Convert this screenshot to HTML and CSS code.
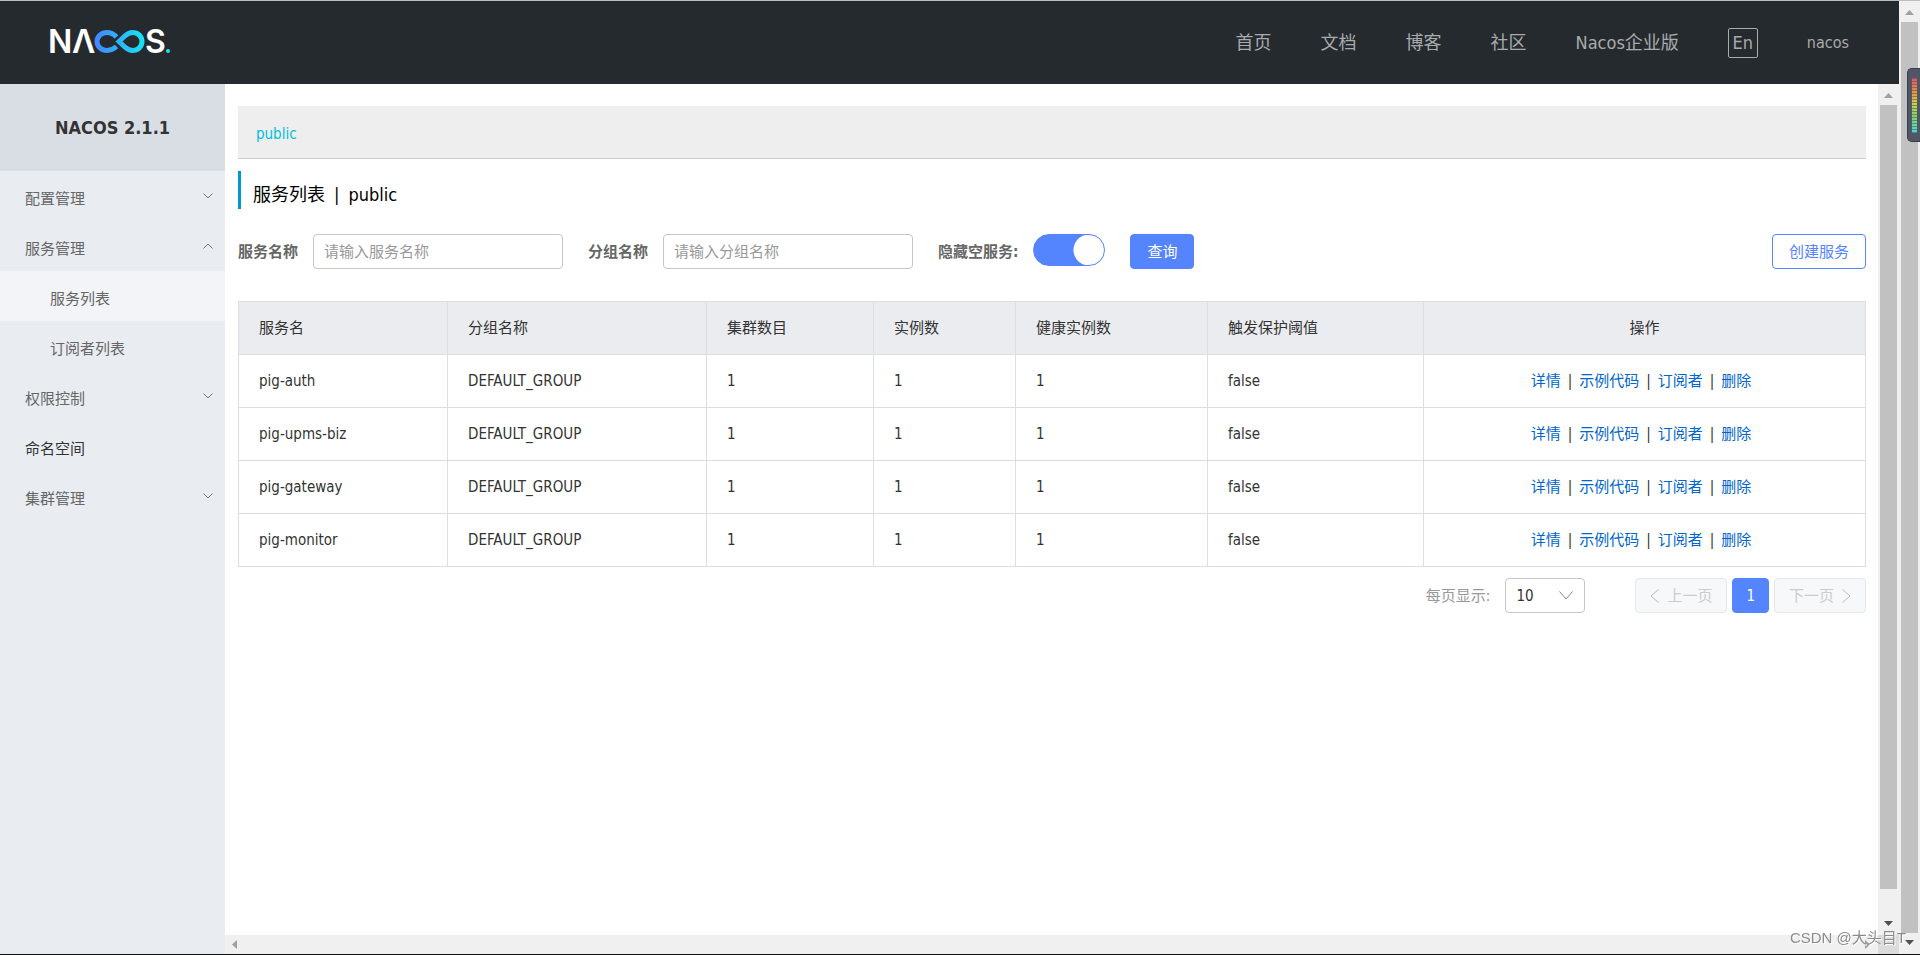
FILE: index.html
```html
<!DOCTYPE html>
<html lang="zh-CN">
<head>
<meta charset="utf-8">
<meta name="viewport" content="width=device-width, initial-scale=1">
<title>Nacos</title>
<link rel="stylesheet" href="styles.css">
</head>
<body>
<div class="page">
  <div class="shell">
    <header class="header">
      <a class="logo" href="#" aria-label="Nacos">
        <svg width="130" height="40" viewBox="-4 -8 130 40" aria-hidden="true">
          <defs>
            <linearGradient id="loop" x1="44" y1="0" x2="95" y2="0" gradientUnits="userSpaceOnUse">
              <stop offset="0" stop-color="#4584ff"/>
              <stop offset="1" stop-color="#15e5f5"/>
            </linearGradient>
          </defs>
          <text class="logo-letter" x="-2" y="24">N</text>
          <text class="logo-letter" x="22" y="24">Λ</text>
          <text class="logo-letter" x="95" y="24">S</text>
          <g fill="none" stroke="url(#loop)" stroke-width="5">
            <path d="M66.500 8C63.500 4.800 60.500 3.500 57 3.500C51.500 3.500 47 7.600 47 12.500S51.500 21.500 57 21.500C60.500 21.500 63.500 20.200 66.500 17.500"/>
            <path d="M69 12.500L75 6.800C77.600 4.600 80 3.500 82.500 3.500C88 3.500 92 7.500 92 12.500S88 21.500 82.500 21.500C80 21.500 77.600 20.400 75 18.200Z"/>
          </g>
          <circle cx="118" cy="22" r="2" fill="#15e5f5"/>
        </svg>
      </a>
      <nav class="nav">
        <a href="#">首页</a>
        <a href="#">文档</a>
        <a href="#">博客</a>
        <a href="#">社区</a>
        <a href="#">Nacos企业版</a>
        <button class="lang" type="button">En</button>
        <a class="user" href="#">nacos</a>
      </nav>
    </header>
    <div class="body">
      <aside class="sidebar">
        <h1 class="product">NACOS 2.1.1</h1>
        <nav class="menu">
          <a class="item" href="#"><span>配置管理</span><svg class="chev" viewBox="0 0 10 6"><path d="M.5 .5L5 5L9.500 .5"/></svg></a>
          <a class="item" href="#"><span>服务管理</span><svg class="chev" viewBox="0 0 10 6"><path d="M.5 5.500L5 1L9.500 5.500"/></svg></a>
          <a class="item sub active" href="#"><span>服务列表</span></a>
          <a class="item sub" href="#"><span>订阅者列表</span></a>
          <a class="item" href="#"><span>权限控制</span><svg class="chev" viewBox="0 0 10 6"><path d="M.5 .5L5 5L9.500 .5"/></svg></a>
          <a class="item dark" href="#"><span>命名空间</span></a>
          <a class="item" href="#"><span>集群管理</span><svg class="chev" viewBox="0 0 10 6"><path d="M.5 .5L5 5L9.500 .5"/></svg></a>
        </nav>
      </aside>
      <div class="frame">
        <div class="frame-row">
          <main class="content">
            <div class="namespaces"><a href="#">public</a></div>
            <h2 class="title"><span>服务列表</span><span>|</span><span>public</span></h2>
            <form class="filters">
              <label for="service">服务名称</label>
              <input class="text" id="service" type="text" placeholder="请输入服务名称">
              <label for="group">分组名称</label>
              <input class="text" id="group" type="text" placeholder="请输入分组名称">
              <label for="hide">隐藏空服务:</label>
              <input class="switch" id="hide" type="checkbox" role="switch" checked>
              <button class="btn primary" type="button">查询</button>
              <button class="btn outline" type="button">创建服务</button>
            </form>
            <table class="services">
              <colgroup>
                <col class="c-name"><col class="c-group"><col class="c-cluster"><col class="c-count"><col class="c-healthy"><col class="c-protect"><col>
              </colgroup>
              <thead>
                <tr><th>服务名</th><th>分组名称</th><th>集群数目</th><th>实例数</th><th>健康实例数</th><th>触发保护阈值</th><th class="ops">操作</th></tr>
              </thead>
              <tbody>
                <tr><td>pig-auth</td><td>DEFAULT_GROUP</td><td>1</td><td>1</td><td>1</td><td>false</td><td class="ops links"><a href="#">详情</a><i>|</i><a href="#">示例代码</a><i>|</i><a href="#">订阅者</a><i>|</i><a href="#">删除</a></td></tr>
                <tr><td>pig-upms-biz</td><td>DEFAULT_GROUP</td><td>1</td><td>1</td><td>1</td><td>false</td><td class="ops links"><a href="#">详情</a><i>|</i><a href="#">示例代码</a><i>|</i><a href="#">订阅者</a><i>|</i><a href="#">删除</a></td></tr>
                <tr><td>pig-gateway</td><td>DEFAULT_GROUP</td><td>1</td><td>1</td><td>1</td><td>false</td><td class="ops links"><a href="#">详情</a><i>|</i><a href="#">示例代码</a><i>|</i><a href="#">订阅者</a><i>|</i><a href="#">删除</a></td></tr>
                <tr><td>pig-monitor</td><td>DEFAULT_GROUP</td><td>1</td><td>1</td><td>1</td><td>false</td><td class="ops links"><a href="#">详情</a><i>|</i><a href="#">示例代码</a><i>|</i><a href="#">订阅者</a><i>|</i><a href="#">删除</a></td></tr>
              </tbody>
            </table>
            <div class="pager">
              <label for="size">每页显示:</label>
              <span class="select">
                <select id="size"><option>10</option><option>20</option><option>30</option></select>
                <svg viewBox="0 0 14 9"><path d="M.5 .5L7 8L13.500 .5"/></svg>
              </span>
              <button class="page-btn" type="button" disabled><svg viewBox="0 0 9 14"><path d="M8.500 .5L1 7L8.500 13.500"/></svg>上一页</button>
              <button class="page-btn current" type="button">1</button>
              <button class="page-btn" type="button" disabled>下一页<svg viewBox="0 0 9 14"><path d="M.5 .5L8 7L.5 13.500"/></svg></button>
            </div>
          </main>
          <div class="vbar">
            <svg class="arrow light" viewBox="0 0 9 5"><path d="M0 5L4.500 0L9 5Z"/></svg>
            <div class="thumb inner"></div>
            <svg class="arrow" viewBox="0 0 9 5"><path d="M0 0L4.500 5L9 0Z"/></svg>
          </div>
        </div>
        <div class="hbar">
          <svg class="side" viewBox="0 0 5 9"><path d="M5 0L0 4.500L5 9Z"/></svg>
          <svg class="side" viewBox="0 0 5 9"><path d="M0 0L5 4.500L0 9Z"/></svg>
          <div class="corner"></div>
        </div>
      </div>
    </div>
  </div>
  <div class="vbar outer">
    <svg class="arrow light" viewBox="0 0 9 5"><path d="M0 5L4.500 0L9 5Z"/></svg>
    <div class="thumb"></div>
    <svg class="arrow" viewBox="0 0 9 5"><path d="M0 0L4.500 5L9 0Z"/></svg>
  </div>
</div>
<div class="meter"><div class="meter-scale"></div></div>
<div class="watermark">CSDN @大头目T</div>
</body>
</html>
```

FILE: styles.css
```css
* {
  box-sizing: border-box;
}

body {
  margin: 0;
  color: #333;
  background: #fff;
  font: 15px/20px "DejaVu Sans Condensed", "Noto Sans CJK SC", sans-serif;
}

a {
  color: inherit;
  text-decoration: none;
}

button,
input,
select {
  margin: 0;
  font: inherit;
}

.page {
  display: flex;
  height: 100vh;
  border-top: 1px solid #bdbdbd;
  border-bottom: 1px solid #111;
}

.shell {
  display: flex;
  flex: 1;
  flex-direction: column;
  min-width: 0;
}

/* Header */
.header {
  display: flex;
  flex: none;
  align-items: center;
  justify-content: space-between;
  height: 83px;
  padding: 0 50px 0 46px;
  background: #252a2f;
}

.logo {
  display: flex;
  padding-bottom: 4px;
}

.logo-letter {
  fill: #fff;
  font: 600 32px Inter, sans-serif;
}

.nav {
  display: flex;
  align-items: center;
  gap: 49px;
  color: #a8aaac;
  font-size: 18px;
}

.lang {
  width: 30px;
  height: 30px;
  padding: 0;
  border: 1px solid #a8aaac;
  border-radius: 2px;
  color: inherit;
  background: none;
  font-size: 18px;
}

.nav .user {
  font-size: 16px;
}

.body {
  display: flex;
  flex: 1;
  min-height: 0;
}

/* Sidebar */
.sidebar {
  flex: none;
  width: 225px;
  background: #e9edf1;
}

.product {
  margin: 0;
  padding: 34px 0 33px;
  background: #d9dee4;
  font-size: 18px;
  line-height: 20px;
  text-align: center;
}

.item {
  display: flex;
  align-items: center;
  justify-content: space-between;
  height: 50px;
  padding: 0 12px 0 25px;
  color: #666;
}

.item span {
  padding-top: 5px;
}

.item.sub {
  padding-left: 50px;
}

.item.active {
  background: #f2f4f7;
}

.item.dark {
  color: #333;
}

.chev {
  width: 10px;
  height: 6px;
  fill: none;
  stroke: #777;
}

/* Main frame */
.frame {
  display: flex;
  flex: 1;
  flex-direction: column;
  min-width: 0;
}

.frame-row {
  display: flex;
  flex: 1;
  min-height: 0;
}

.content {
  flex: 1;
  min-width: 0;
  padding: 22px 12px 0 13px;
}

.namespaces {
  padding: 18px 18px 14px;
  border-bottom: 1px solid #ccc;
  color: #00c1de;
  background: #eee;
}

.title {
  display: flex;
  gap: 9px;
  margin: 12px 0 25px;
  padding: 14px 0 4px 12px;
  border-left: 3px solid #09c;
  color: #000;
  font-size: 18px;
  font-weight: 400;
}

.filters {
  display: flex;
  align-items: center;
  margin-bottom: 32px;
}

.filters label {
  margin-right: 15px;
  color: #666;
  font-weight: 700;
}

.text {
  width: 250px;
  height: 35px;
  margin-right: 25px;
  padding: 0 10px;
  border: 1px solid #c4c6cf;
  border-radius: 4px;
  background: #fff;
}

.text::placeholder {
  color: #999;
}

.switch {
  align-self: flex-start;
  width: 72px;
  height: 32px;
  margin-right: 25px;
  border: 1px solid #5584ff;
  border-radius: 16px;
  appearance: none;
  background: radial-gradient(circle at 55px 15px, #fff 15px, #5584ff 16px);
}

.btn {
  height: 35px;
  padding: 0 16px;
  border: 1px solid #5584ff;
  border-radius: 4px;
}

.primary {
  color: #fff;
  background: #5584ff;
}

.outline {
  margin-left: auto;
  color: #5584ff;
  background: #fff;
}

/* Table */
.services {
  width: 100%;
  border-collapse: collapse;
  table-layout: fixed;
}

.c-name { width: 209px; }
.c-group { width: 259px; }
.c-cluster { width: 167px; }
.c-count { width: 142px; }
.c-healthy { width: 192px; }
.c-protect { width: 216px; }

.services th,
.services td {
  padding: 16px 20px;
  border: 1px solid #dcdee3;
  font-weight: 400;
  text-align: left;
}

.services th {
  background: #ebecf0;
}

.services .ops {
  text-align: center;
}

.services .links {
  padding-right: 27px;
}

.ops a {
  color: #06c;
}

.ops i {
  margin: 0 7px;
  font-style: normal;
}

/* Pagination */
.pager {
  display: flex;
  align-items: center;
  justify-content: flex-end;
  gap: 5px;
  margin-top: 11px;
}

.pager label {
  margin-right: 10px;
  color: #999;
}

.select {
  position: relative;
  margin-right: 45px;
}

.select select {
  display: block;
  width: 80px;
  height: 35px;
  padding: 0 10px;
  border: 1px solid #c4c6cf;
  border-radius: 4px;
  appearance: none;
  color: #333;
  background: #fff;
}

.select svg {
  position: absolute;
  top: 13px;
  right: 12px;
  width: 14px;
  height: 9px;
  fill: none;
  stroke: #888;
}

.page-btn {
  display: flex;
  align-items: center;
  gap: 8px;
  height: 35px;
  padding: 0 14px;
  border: 1px solid #e6e7eb;
  border-radius: 4px;
  color: #ccc;
  background: #f7f8fa;
}

.page-btn svg {
  width: 9px;
  height: 14px;
  fill: none;
  stroke: #bbb;
  stroke-width: 1;
}

.page-btn.current {
  padding: 0 13px;
  border-color: #5584ff;
  color: #fff;
  background: #5584ff;
}

/* Scroll bars */
.vbar {
  display: flex;
  flex: none;
  flex-direction: column;
  align-items: center;
  width: 21px;
  padding: 9px 0;
  gap: 7px;
  background: #f0f0f0;
}

.arrow {
  width: 9px;
  height: 5px;
  fill: #505050;
}

.arrow.light {
  fill: #a0a0a0;
}

.thumb {
  flex: 1;
  width: 17px;
  background: #c1c1c1;
}

.thumb.inner {
  margin-bottom: 25px;
}

.hbar {
  display: flex;
  align-items: center;
  justify-content: space-between;
  height: 19px;
  padding-left: 7px;
  background: #f0f0f0;
}

.side {
  width: 5px;
  height: 9px;
  fill: #a0a0a0;
}

.side + .side {
  margin-left: auto;
  margin-right: 8px;
}

.corner {
  width: 21px;
  height: 19px;
  background: #dcdcdc;
}

/* Overlays */
.meter {
  position: fixed;
  top: 68px;
  right: 0;
  width: 13px;
  height: 74px;
  padding: 9px 3px 8px 4px;
  border: 1px solid #3a3e4a;
  border-right: 0;
  border-radius: 5px 0 0 5px;
  background: #505665;
}

.meter-scale {
  height: 100%;
  background:
    repeating-linear-gradient(#50566599 0 1px, transparent 1px 3px),
    linear-gradient(#ec4f63, #e8943e 25%, #d8cc3c 45%, #8fd45c 65%, #3fdccb);
}

.watermark {
  position: fixed;
  right: 14px;
  bottom: 7px;
  color: #8c8c8c;
  font: 15px/20px "Liberation Sans", "Noto Sans CJK SC", sans-serif;
  text-shadow: 1px 1px 0 #fff;
}
```
